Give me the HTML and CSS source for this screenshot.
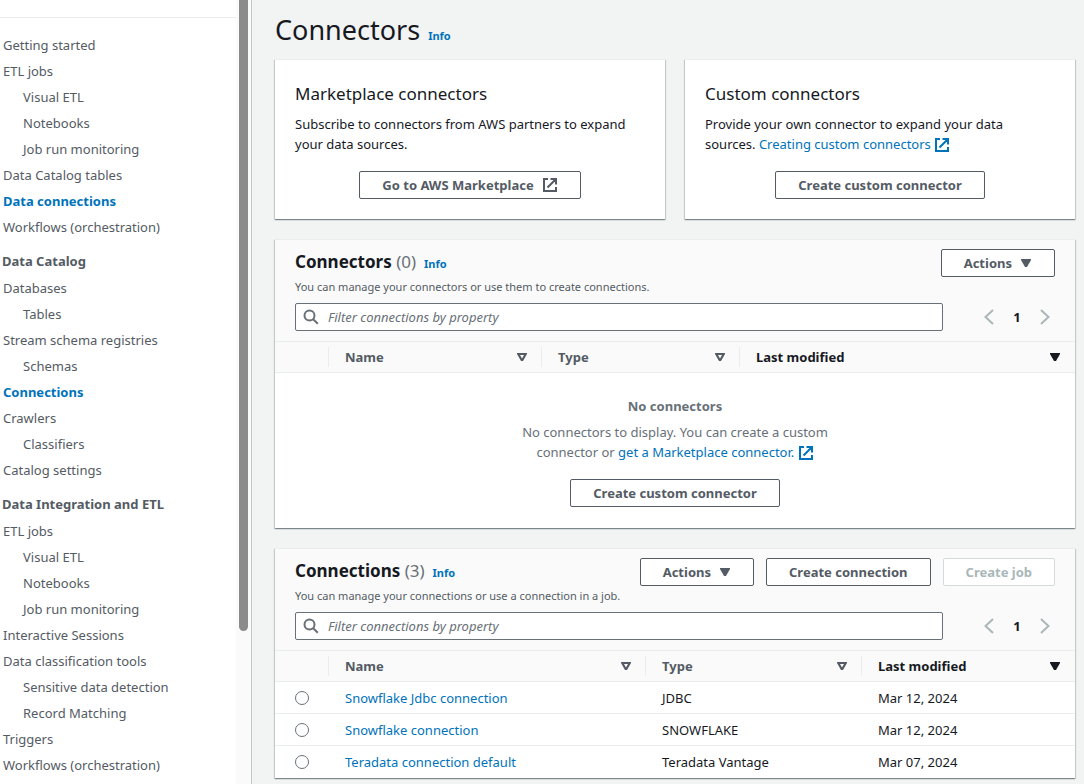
FILE: index.html
```html
<!DOCTYPE html>
<html lang="en">
<head>
<meta charset="utf-8">
<title>Connectors</title>
<link rel="stylesheet" href="styles.css">
</head>
<body>
<svg class="sprite" aria-hidden="true">
  <symbol id="external" viewBox="0 0 16 16"><path d="M6 2H2v12h12v-4M8.500 2H14v5.500M14 2 5.500 10.500" fill="none" stroke="currentColor" stroke-width="2"/></symbol>
  <symbol id="search" viewBox="0 0 16 16"><circle cx="6.500" cy="6.500" r="5" fill="none" stroke="currentColor" stroke-width="2"/><path d="m10.200 10.200 4.600 4.600" stroke="currentColor" stroke-width="2"/></symbol>
  <symbol id="caret" viewBox="0 0 12 10"><path d="M1 1h10v1L7 9H5L1 2z" fill="currentColor"/></symbol>
  <symbol id="caret-open" viewBox="0 0 12 10"><path d="M1 1h10v1L7 9H5L1 2zM4 3l2 3.500L8 3z" fill="currentColor" fill-rule="evenodd"/></symbol>
  <symbol id="prev" viewBox="0 0 16 16"><path d="M12 1 4.500 8l7.500 7" fill="none" stroke="currentColor" stroke-width="2"/></symbol>
  <symbol id="next" viewBox="0 0 16 16"><path d="m4 1 7.500 7L4 15" fill="none" stroke="currentColor" stroke-width="2"/></symbol>
</svg>
<div class="layout">
  <aside class="sidebar">
    <nav class="nav">
      <ul>
        <li><a href="#">Getting started</a></li>
        <li><a href="#">ETL jobs</a>
          <ul>
            <li><a href="#">Visual ETL</a></li>
            <li><a href="#">Notebooks</a></li>
            <li><a href="#">Job run monitoring</a></li>
          </ul></li>
        <li><a href="#">Data Catalog tables</a></li>
        <li><a href="#" class="active">Data connections</a></li>
        <li><a href="#">Workflows (orchestration)</a></li>
      </ul>
      <h2>Data Catalog</h2>
      <ul>
        <li><a href="#">Databases</a>
          <ul><li><a href="#">Tables</a></li></ul></li>
        <li><a href="#">Stream schema registries</a>
          <ul><li><a href="#">Schemas</a></li></ul></li>
        <li><a href="#" class="active">Connections</a></li>
        <li><a href="#">Crawlers</a>
          <ul><li><a href="#">Classifiers</a></li></ul></li>
        <li><a href="#">Catalog settings</a></li>
      </ul>
      <h2>Data Integration and ETL</h2>
      <ul>
        <li><a href="#">ETL jobs</a>
          <ul>
            <li><a href="#">Visual ETL</a></li>
            <li><a href="#">Notebooks</a></li>
            <li><a href="#">Job run monitoring</a></li>
          </ul></li>
        <li><a href="#">Interactive Sessions</a></li>
        <li><a href="#">Data classification tools</a>
          <ul>
            <li><a href="#">Sensitive data detection</a></li>
            <li><a href="#">Record Matching</a></li>
          </ul></li>
        <li><a href="#">Triggers</a></li>
        <li><a href="#">Workflows (orchestration)</a></li>
      </ul>
    </nav>
    <div class="rail"><div class="thumb"></div></div>
  </aside>

  <main class="main">
    <header class="page-head"><h1>Connectors</h1><a href="#" class="info">Info</a></header>

    <div class="cards">
      <section class="panel card">
        <h2>Marketplace connectors</h2>
        <p>Subscribe to connectors from AWS partners to expand your data sources.</p>
        <button type="button" class="btn">Go to AWS Marketplace <svg class="icon"><use href="#external"/></svg></button>
      </section>
      <section class="panel card">
        <h2>Custom connectors</h2>
        <p>Provide your own connector to expand your data sources. <a href="#">Creating custom connectors <svg class="icon"><use href="#external"/></svg></a></p>
        <button type="button" class="btn">Create custom connector</button>
      </section>
    </div>

    <section class="panel">
      <div class="tools">
        <div class="title-row">
          <div class="title"><h2>Connectors <span>(0)</span></h2><a href="#" class="info">Info</a></div>
          <button type="button" class="btn">Actions <svg class="caret"><use href="#caret"/></svg></button>
        </div>
        <p class="desc">You can manage your connectors or use them to create connections.</p>
        <div class="filter-row">
          <label class="filter"><svg class="icon"><use href="#search"/></svg><input type="text" aria-label="Filter connectors" placeholder="Filter connections by property"></label>
          <div class="pager">
            <button type="button" aria-label="Previous page" disabled><svg class="icon"><use href="#prev"/></svg></button>
            <button type="button" class="current">1</button>
            <button type="button" aria-label="Next page" disabled><svg class="icon"><use href="#next"/></svg></button>
          </div>
        </div>
      </div>
      <table>
        <colgroup><col class="c-select"><col class="c-name-sm"><col class="c-type-sm"><col></colgroup>
        <thead><tr>
          <th></th>
          <th><button type="button">Name <svg class="caret"><use href="#caret-open"/></svg></button></th>
          <th><button type="button">Type <svg class="caret"><use href="#caret-open"/></svg></button></th>
          <th class="sorted"><button type="button">Last modified <svg class="caret"><use href="#caret"/></svg></button></th>
        </tr></thead>
      </table>
      <div class="empty">
        <strong>No connectors</strong>
        <p>No connectors to display. You can create a custom connector or <a href="#">get a Marketplace connector. <svg class="icon"><use href="#external"/></svg></a></p>
        <button type="button" class="btn">Create custom connector</button>
      </div>
    </section>

    <section class="panel">
      <div class="tools">
        <div class="title-row">
          <div class="title"><h2>Connections <span>(3)</span></h2><a href="#" class="info">Info</a></div>
          <div class="actions">
            <button type="button" class="btn">Actions <svg class="caret"><use href="#caret"/></svg></button>
            <button type="button" class="btn">Create connection</button>
            <button type="button" class="btn" disabled>Create job</button>
          </div>
        </div>
        <p class="desc">You can manage your connections or use a connection in a job.</p>
        <div class="filter-row">
          <label class="filter"><svg class="icon"><use href="#search"/></svg><input type="text" aria-label="Filter connections" placeholder="Filter connections by property"></label>
          <div class="pager">
            <button type="button" aria-label="Previous page" disabled><svg class="icon"><use href="#prev"/></svg></button>
            <button type="button" class="current">1</button>
            <button type="button" aria-label="Next page" disabled><svg class="icon"><use href="#next"/></svg></button>
          </div>
        </div>
      </div>
      <table>
        <colgroup><col class="c-select"><col class="c-name"><col class="c-type"><col></colgroup>
        <thead><tr>
          <th></th>
          <th><button type="button">Name <svg class="caret"><use href="#caret-open"/></svg></button></th>
          <th><button type="button">Type <svg class="caret"><use href="#caret-open"/></svg></button></th>
          <th class="sorted"><button type="button">Last modified <svg class="caret"><use href="#caret"/></svg></button></th>
        </tr></thead>
        <tbody>
          <tr><td><input type="radio" name="connection" aria-label="Snowflake Jdbc connection"></td><td><a href="#">Snowflake Jdbc connection</a></td><td>JDBC</td><td>Mar 12, 2024</td></tr>
          <tr><td><input type="radio" name="connection" aria-label="Snowflake connection"></td><td><a href="#">Snowflake connection</a></td><td>SNOWFLAKE</td><td>Mar 12, 2024</td></tr>
          <tr><td><input type="radio" name="connection" aria-label="Teradata connection default"></td><td><a href="#">Teradata connection default</a></td><td>Teradata Vantage</td><td>Mar 07, 2024</td></tr>
        </tbody>
      </table>
    </section>
  </main>
</div>
</body>
</html>
```
FILE: styles.css
```css
* { box-sizing: border-box; }
body {
  margin: 0;
  background: #f2f3f3;
  color: #16191f;
  font: 13px/20px "Noto Sans", "Open Sans", sans-serif;
}
h1, h2, p, ul { margin: 0; padding: 0; }
ul { list-style: none; }
a { color: #0073bb; text-decoration: none; }
button, input { font: inherit; color: inherit; }
button { border: 0; background: none; padding: 0; }
.sprite { display: none; }
.icon { width: 16px; height: 16px; flex: none; }
.caret { width: 12px; height: 10px; flex: none; }

.layout { display: grid; grid-template-columns: 252px 1fr; min-height: 100vh; }

.sidebar {
  display: grid;
  grid-template-columns: 1fr 15px;
  background: #fff;
  border-right: 1px solid #c4c8c8;
}
.nav { padding-top: 17px; color: #545b64; }
.nav::before { content: ""; display: block; border-top: 1px solid #eaeded; margin-bottom: 14px; }
.nav li { padding-left: 3px; }
.nav li li { padding-left: 20px; }
.nav a { display: block; line-height: 26px; color: #545b64; }
.nav a.active { color: #0073bb; font-weight: 700; }
.nav h2 { padding: 11px 0 4px 2px; font-size: 13px; line-height: 20px; }
.rail { display: flex; flex-direction: column; align-items: center; background: #fafafa; }
.thumb { width: 9px; height: 631px; background: #8b8b8b; border-radius: 0 0 5px 5px; }

.main { padding: 12px 9px 6px 23px; min-width: 0; }
.page-head { display: flex; align-items: baseline; gap: 8px; margin-bottom: 11px; }
h1 { font-size: 27px; line-height: 36px; font-weight: 400; }
.info { font-size: 11px; line-height: 16px; font-weight: 700; }

.panel {
  background: #fff;
  border-top: 1px solid #eaeded;
  box-shadow: 0 1px 1px 0 rgba(0, 28, 36, .3), 1px 1px 1px 0 rgba(0, 28, 36, .15), -1px 1px 1px 0 rgba(0, 28, 36, .15);
}
.main > .panel { margin-top: 20px; }
.cards { display: grid; grid-template-columns: 1fr 1fr; gap: 20px; }
.card { padding: 20px; text-align: center; }
.card h2 { font-size: 17px; line-height: 28px; font-weight: 400; text-align: left; }
.card p { margin: 6px 0 17px; text-align: left; }
p .icon { vertical-align: -4px; }

.btn {
  display: inline-flex;
  align-items: center;
  justify-content: center;
  gap: 8px;
  height: 28px;
  padding: 0 22px;
  border: 1px solid #545b64;
  border-radius: 2px;
  background: #fff;
  color: #545b64;
  font-weight: 700;
  white-space: nowrap;
  vertical-align: top;
}
.btn:disabled { border-color: #d5dbdb; color: #aab7b8; }

.tools { padding: 9px 20px 10px; background: #fafafa; }
.title-row { display: flex; justify-content: space-between; }
.title { display: flex; align-items: baseline; gap: 8px; }
.title h2 { font-size: 17px; line-height: 26px; }
.title span { font-weight: 400; color: #687078; }
.actions { display: flex; gap: 12px; }
.desc { margin: 2px 0 8px; font-size: 11px; line-height: 16px; color: #545b64; }
.filter-row { display: flex; justify-content: space-between; gap: 36px; }
.filter {
  display: flex;
  align-items: center;
  flex: 1;
  gap: 9px;
  height: 28px;
  padding: 0 7px;
  border: 1px solid #687078;
  border-radius: 2px;
  background: #fff;
  color: #687078;
}
.filter input { flex: 1; min-width: 0; border: 0; padding: 0; background: none; outline: none; }
.filter input::placeholder { color: #687078; font-style: italic; opacity: 1; }
.pager { display: flex; align-items: center; gap: 8px; }
.pager button { display: flex; align-items: center; justify-content: center; width: 20px; height: 28px; }
.pager button:disabled { color: #aab7b8; }
.pager .current { font-weight: 700; }

table { width: 100%; border-collapse: separate; border-spacing: 0; table-layout: fixed; }
.c-select { width: 53px; }
.c-name-sm { width: 213px; }
.c-type-sm { width: 198px; }
.c-name { width: 317px; }
.c-type { width: 216px; }
th { padding: 5px 0; background: #fafafa; border: solid #eaeded; border-width: 1px 0; color: #545b64; }
th button {
  display: flex;
  align-items: center;
  justify-content: space-between;
  width: 100%;
  height: 20px;
  padding: 0 13px 0 16px;
  border-left: 1px solid #eaeded;
  font-weight: 700;
}
th:last-child button { padding-right: 14px; }
th.sorted { color: #16191f; }
td { height: 32px; padding: 0 0 0 17px; border-bottom: 1px solid #eaeded; }
tr:last-child td { border-bottom: 0; }
td:first-child { padding-left: 20px; }
td input {
  display: block;
  appearance: none;
  width: 14px;
  height: 14px;
  margin: 0;
  border: 1px solid #687078;
  border-radius: 50%;
  background: #fff;
}

.empty { display: flex; flex-direction: column; align-items: center; padding: 23px 20px 21px; color: #687078; text-align: center; }
.empty p { max-width: 340px; margin: 6px 0 17px; }
```
